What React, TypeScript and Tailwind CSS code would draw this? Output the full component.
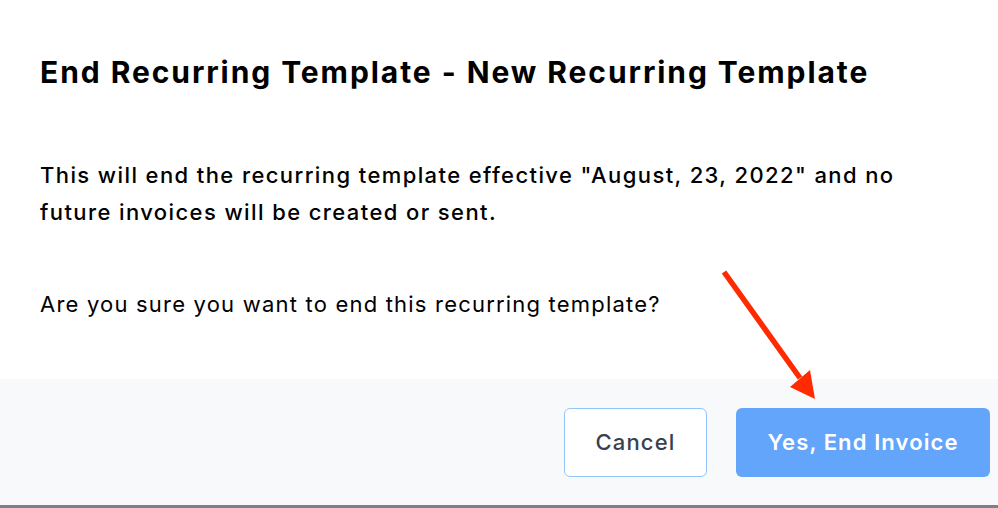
import React from "react";

export default function App() {
  return (
    <div
      className="relative w-[998px] h-[508px] bg-white overflow-hidden flex flex-col"
      style={{ fontFamily: "Inter, 'Noto Sans', sans-serif" }}
    >
      <div className="flex-1 pl-[40px] pr-[8px] pt-[52px]">
        <h1 className="text-[30px] leading-[40px] font-bold text-black tracking-[1.93px] whitespace-nowrap">
          End Recurring Template - New Recurring Template
        </h1>
        <p className="mt-[65px] w-[880px] text-[22px] leading-[37px] font-medium text-black tracking-[1.4px]">
          This will end the recurring template effective "August, 23, 2022" and no future invoices will be created or sent.
        </p>
        <p className="mt-[55px] text-[22px] leading-[37px] text-black tracking-[1.2px]">
          Are you sure you want to end this recurring template?
        </p>
      </div>
      <div className="h-[126px] bg-[#f8f9fb] flex items-center justify-end gap-[29px] pr-[8px]">
        <button className="w-[143px] h-[69px] rounded-[6px] border border-[#93c5fd] bg-white text-[22px] font-medium text-[#374151] tracking-[1.2px]">
          Cancel
        </button>
        <button className="w-[254px] h-[69px] rounded-[6px] bg-[#63a5fa] text-[22px] font-semibold text-white tracking-[1.1px]">
          Yes, End Invoice
        </button>
      </div>
      <div className="h-[3px] bg-[#7c8089]" />
      <svg
        className="absolute left-0 top-0 pointer-events-none"
        width="998"
        height="508"
        viewBox="0 0 998 508"
      >
        <line x1="724" y1="272" x2="800" y2="378" stroke="#ff2a00" strokeWidth="5.5" strokeLinecap="butt" />
        <polygon points="815,399 790,387 810,370" fill="#ff2a00" />
      </svg>
    </div>
  );
}
